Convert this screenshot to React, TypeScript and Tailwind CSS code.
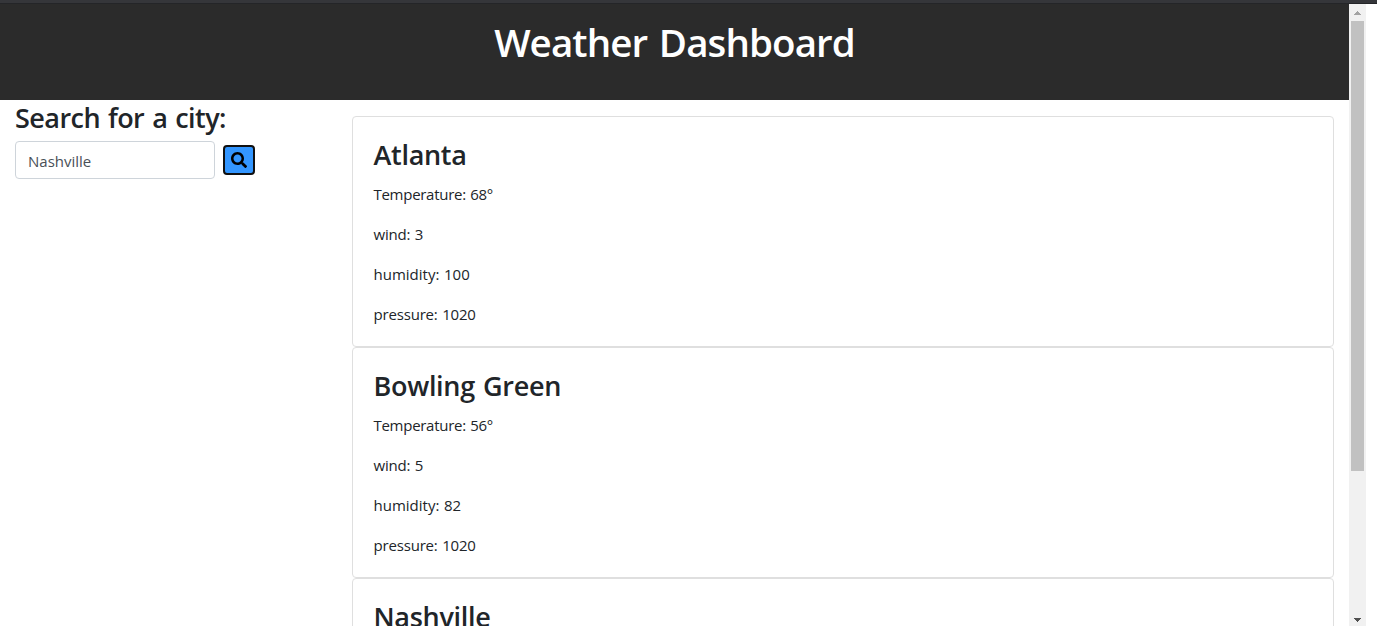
import React from "react";

const cities = [
  { name: "Atlanta", temp: 68, wind: 3, humidity: 100, pressure: 1020 },
  { name: "Bowling Green", temp: 56, wind: 5, humidity: 82, pressure: 1020 },
  { name: "Nashville" },
];

function SearchIcon() {
  return (
    <svg className="size-4" viewBox="0 0 512 512" fill="#000">
      <path d="M505 442.700 405.300 343c-4.500-4.500-10.600-7-17-7H372c27.600-35.300 44-79.700 44-128C416 93.100 322.900 0 208 0S0 93.100 0 208s93.100 208 208 208c48.300 0 92.700-16.400 128-44v16.300c0 6.400 2.500 12.500 7 17l99.700 99.700c9.400 9.400 24.600 9.400 33.900 0l28.300-28.300c9.400-9.400 9.400-24.600.1-34zM208 336c-70.700 0-128-57.200-128-128 0-70.700 57.200-128 128-128 70.700 0 128 57.200 128 128 0 70.700-57.200 128-128 128z" />
    </svg>
  );
}

function Scrollbar() {
  return (
    <div className="flex w-[17px] flex-col items-center bg-[#f1f1f1]">
      <div className="flex h-[17px] items-center justify-center">
        <svg className="h-1 w-[7px]" viewBox="0 0 7 4" shapeRendering="crispEdges" fill="#a3a3a3">
          <path d="M3 0h1v1h1v1h1v1h1v1H0V3h1V2h1V1h1z" />
        </svg>
      </div>
      <div className="h-[450px] w-[13px] bg-[#c1c1c1]" />
      <div className="mt-auto flex h-[13px] items-center justify-center">
        <svg className="h-1 w-[7px]" viewBox="0 0 7 4" shapeRendering="crispEdges" fill="#505050">
          <path d="M0 0h7v1H6v1H5v1H4v1H3V3H2V2H1V1H0z" />
        </svg>
      </div>
    </div>
  );
}

export default function App() {
  return (
    <div className="flex h-[626px] flex-col overflow-hidden bg-white font-['Open_Sans','Noto_Sans',sans-serif] text-[#212529]">
      <div className="h-[3px] shrink-0 bg-[#35363a]" />
      <div className="h-px shrink-0 bg-[#242528]" />
      <div className="flex min-h-0 flex-1">
        <div className="flex w-[1349px] flex-col overflow-hidden">
          <header className="h-24 shrink-0 bg-[#2b2b2b] pt-[14px] text-center text-[38.5px] font-semibold leading-[48px] tracking-[-0.9px] text-white [word-spacing:2.5px]">
            <h1>Weather Dashboard</h1>
          </header>
          <main className="flex min-h-0 flex-1">
            <aside className="w-[337px] shrink-0 pl-[15px]">
              <h2 className="mt-px mb-[6px] text-[27px] font-semibold leading-[34px] tracking-[-0.55px] [word-spacing:1.5px]">Search for a city:</h2>
              <div className="flex items-center gap-2">
                <input
                  className="h-[38px] w-[200px] rounded border border-[#ced4da] px-3 pt-0.5 text-[15px] text-[#495057]"
                  defaultValue="Nashville"
                />
                <button className="flex h-[30px] w-8 items-center justify-center rounded border-2 border-[#101010] bg-[#3396ff]">
                  <SearchIcon />
                </button>
              </div>
            </aside>
            <section className="ml-[15px] w-[982px] pt-4">
              {cities.map((c) => (
                <article key={c.name} className="h-[231px] rounded border border-[#dfdfdf] px-[20.5px] pt-[21px]">
                  <h3 className="mb-[10px] text-[27px] font-semibold leading-[34px] tracking-[-0.3px] [word-spacing:1.5px]">{c.name}</h3>
                  {c.temp !== undefined && (
                    <div className="flex flex-col gap-4 text-[15px] leading-6 tracking-[-0.18px] [word-spacing:0.8px]">
                      <p className="tracking-[-0.28px]">Temperature: {c.temp}°</p>
                      <p>wind: {c.wind}</p>
                      <p className="tracking-normal">humidity: {c.humidity}</p>
                      <p>pressure: {c.pressure}</p>
                    </div>
                  )}
                </article>
              ))}
            </section>
          </main>
        </div>
        <Scrollbar />
      </div>
    </div>
  );
}
